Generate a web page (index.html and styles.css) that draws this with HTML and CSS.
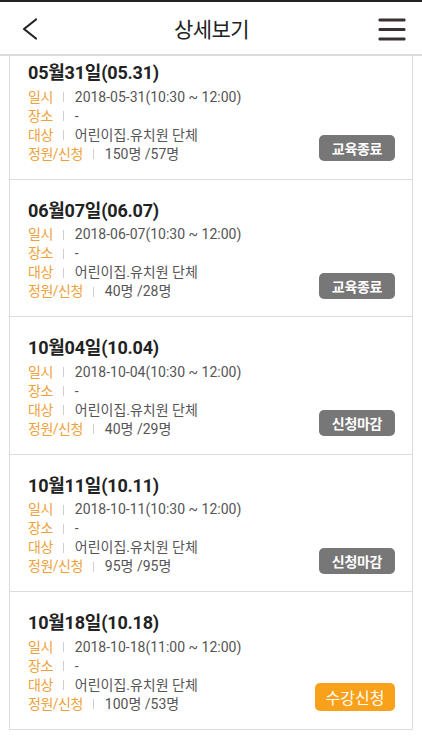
FILE: index.html
```html
<!DOCTYPE html>
<html lang="ko">
<head>
<meta charset="utf-8">
<title>상세보기</title>
<link rel="stylesheet" href="styles.css">
</head>
<body>
<header class="topbar">
  <button class="icon-btn back" aria-label="뒤로">
    <svg width="18" height="24" viewBox="0 0 18 24"><polyline points="15,2.5 3,12 15,21.5" fill="none" stroke="#222" stroke-width="2.2" stroke-linecap="round" stroke-linejoin="round"/></svg>
  </button>
  <h1 class="title">상세보기</h1>
  <button class="icon-btn menu" aria-label="메뉴">
    <svg width="28" height="24" viewBox="0 0 28 24"><g fill="#3a3232"><rect x="0.5" y="1.5" width="27" height="3" rx="1.2"/><rect x="0.5" y="11" width="27" height="3" rx="1.2"/><rect x="0.5" y="20.5" width="27" height="3" rx="1.2"/></g></svg>
  </button>
</header>

<main class="list">
  <section class="card">
    <h2 class="card-title">05월31일(05.31)</h2>
    <div class="card-body">
      <dl class="info">
        <div class="row"><dt>일시</dt><dd>2018-05-31(10:30 ~ 12:00)</dd></div>
        <div class="row"><dt>장소</dt><dd>-</dd></div>
        <div class="row"><dt>대상</dt><dd>어린이집.유치원 단체</dd></div>
        <div class="row"><dt>정원/신청</dt><dd>150명 /57명</dd></div>
      </dl>
      <span class="badge done">교육종료</span>
    </div>
  </section>
  <section class="card">
    <h2 class="card-title">06월07일(06.07)</h2>
    <div class="card-body">
      <dl class="info">
        <div class="row"><dt>일시</dt><dd>2018-06-07(10:30 ~ 12:00)</dd></div>
        <div class="row"><dt>장소</dt><dd>-</dd></div>
        <div class="row"><dt>대상</dt><dd>어린이집.유치원 단체</dd></div>
        <div class="row"><dt>정원/신청</dt><dd>40명 /28명</dd></div>
      </dl>
      <span class="badge done">교육종료</span>
    </div>
  </section>
  <section class="card">
    <h2 class="card-title">10월04일(10.04)</h2>
    <div class="card-body">
      <dl class="info">
        <div class="row"><dt>일시</dt><dd>2018-10-04(10:30 ~ 12:00)</dd></div>
        <div class="row"><dt>장소</dt><dd>-</dd></div>
        <div class="row"><dt>대상</dt><dd>어린이집.유치원 단체</dd></div>
        <div class="row"><dt>정원/신청</dt><dd>40명 /29명</dd></div>
      </dl>
      <span class="badge done">신청마감</span>
    </div>
  </section>
  <section class="card">
    <h2 class="card-title">10월11일(10.11)</h2>
    <div class="card-body">
      <dl class="info">
        <div class="row"><dt>일시</dt><dd>2018-10-11(10:30 ~ 12:00)</dd></div>
        <div class="row"><dt>장소</dt><dd>-</dd></div>
        <div class="row"><dt>대상</dt><dd>어린이집.유치원 단체</dd></div>
        <div class="row"><dt>정원/신청</dt><dd>95명 /95명</dd></div>
      </dl>
      <span class="badge done">신청마감</span>
    </div>
  </section>
  <section class="card">
    <h2 class="card-title">10월18일(10.18)</h2>
    <div class="card-body">
      <dl class="info">
        <div class="row"><dt>일시</dt><dd>2018-10-18(11:00 ~ 12:00)</dd></div>
        <div class="row"><dt>장소</dt><dd>-</dd></div>
        <div class="row"><dt>대상</dt><dd>어린이집.유치원 단체</dd></div>
        <div class="row"><dt>정원/신청</dt><dd>100명 /53명</dd></div>
      </dl>
      <button class="badge apply">수강신청</button>
    </div>
  </section>
</main>
</body>
</html>
```

FILE: styles.css
```css
* { box-sizing: border-box; }

html, body {
  margin: 0;
  padding: 0;
  background: #fff;
}

body {
  font-family: Roboto, "Noto Sans CJK KR", sans-serif;
  color: #222;
  width: 422px;
  height: 750px;
  overflow: hidden;
}

.topbar {
  position: fixed;
  top: 0;
  left: 0;
  right: 0;
  z-index: 10;
  height: 56px;
  background: #fff;
  border-top: 2px solid #222;
  border-bottom: 2px solid #dcdcdc;
  display: flex;
  align-items: center;
  justify-content: space-between;
  padding: 0 16px 0 21px;
}

.icon-btn {
  border: 0;
  background: none;
  padding: 0;
  display: flex;
  align-items: center;
  justify-content: center;
  cursor: pointer;
}

.back { width: 18px; height: 24px; margin-top: 2px; }
.menu { width: 28px; height: 24px; margin-top: 1px; }

.title {
  margin: 0;
  font-size: 21px;
  font-weight: 400;
  color: #222;
  letter-spacing: -0.6px;
  padding-left: 6px;
}

.list {
  margin: 41px 9px 0 9px;
  border: 1px solid #dcdcdc;
}

.card {
  padding: 20px 17px 15px 18px;
  border-bottom: 1px solid #dcdcdc;
}

.card:last-child { border-bottom: 0; }

.card-title {
  margin: 0;
  font-size: 18px;
  line-height: 22px;
  font-weight: 700;
  color: #222;
  letter-spacing: -0.2px;
}

.card-body {
  display: flex;
  align-items: flex-end;
  justify-content: space-between;
}

.info {
  margin: 0;
  padding-top: 3.5px;
}

.row {
  display: flex;
  align-items: center;
  font-size: 14px;
  line-height: 19px;
}

.row dt {
  color: #eea13a;
  letter-spacing: -0.5px;
  display: flex;
  align-items: center;
}

.row dt::after {
  content: "";
  width: 1px;
  height: 10px;
  background: #cfcfcf;
  margin: 0 11px 0 10px;
}

.row dd {
  margin: 0;
  color: #555;
}

.badge {
  display: inline-flex;
  align-items: center;
  justify-content: center;
  border: 0;
  border-radius: 5px;
  color: #fff;
  font-family: Roboto, "Noto Sans CJK KR", sans-serif;
  white-space: nowrap;
  margin-bottom: 2.5px;
}

.badge.done {
  width: 76px;
  height: 26px;
  background: #777;
  font-size: 14px;
  font-weight: 700;
  letter-spacing: -0.3px;
}

.badge.apply {
  width: 80px;
  height: 28px;
  background: #f9a11b;
  font-size: 16px;
  font-weight: 400;
  padding: 0;
}
```
